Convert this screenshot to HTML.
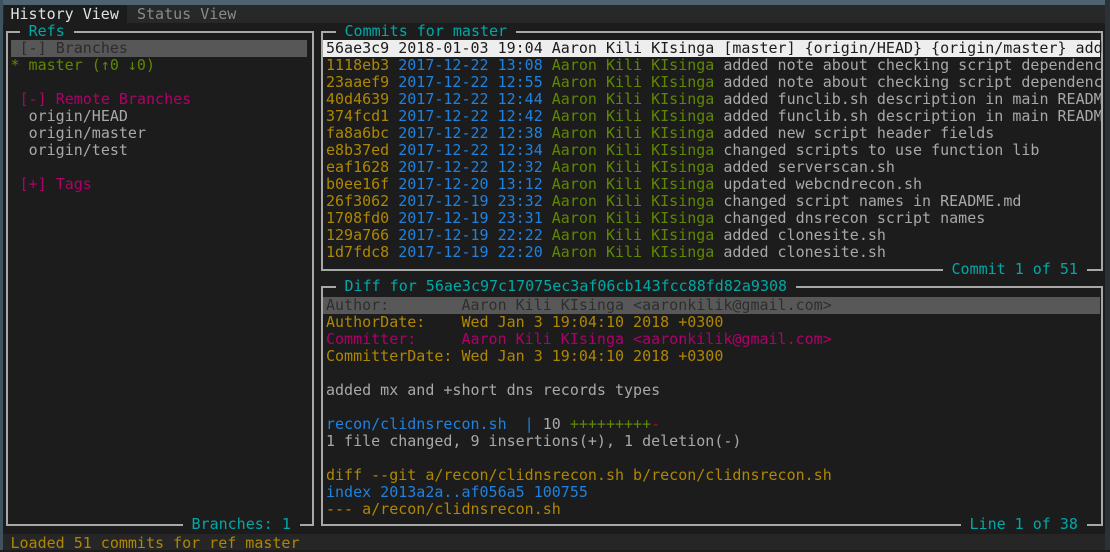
<!DOCTYPE html>
<html><head><meta charset="utf-8"><style>
html,body{margin:0;padding:0;}
body{width:1110px;height:550px;background:#1c1c1c;position:relative;overflow:hidden;font-family:"DejaVu Sans Mono","Liberation Mono",monospace;font-size:15px;}
.l{position:absolute;height:17px;line-height:17px;white-space:pre;color:#a8a8a8;}
.h{position:absolute;height:2px;background:#a8a8a8;}
.v{position:absolute;width:2px;background:#a8a8a8;}
.t{background:#1c1c1c;color:#00a8a8;}
.y{color:#af8700}.b{color:#1e82e0}.g{color:#5f8700}.m{color:#b0006a}.c{color:#00a8a8}.r{color:#c0002a}
</style></head><body>
<div style="position:absolute;left:0;top:0;width:1110px;height:5px;background:#4d6370"></div>
<div style="position:absolute;left:0;top:0;width:3px;height:550px;background:#3f525d"></div>
<div style="position:absolute;left:1105px;top:0;width:5px;height:550px;background:#2a3238"></div>
<div style="position:absolute;left:3px;top:5px;width:1102px;height:18px;background:#282828"></div>
<div style="position:absolute;left:4px;top:5px;width:123px;height:18px;background:#1c1c1c"></div>
<div class="l" style="top:6px;left:10.5px;color:#e0e0e0">History View</div>
<div class="l" style="top:6px;left:137px;color:#8a8a8a">Status View</div>

<!-- left box -->
<div class="h" style="left:6px;top:31px;width:308px"></div>
<div class="h" style="left:6px;top:524px;width:308px"></div>
<div class="v" style="left:6px;top:31px;height:495px"></div>
<div class="v" style="left:312px;top:31px;height:495px"></div>
<div class="l t" style="top:23px;left:19.6px"> Refs </div>
<div class="l t" style="top:516px;left:182.5px"> Branches: 1 </div>

<!-- commits box -->
<div class="h" style="left:321px;top:31px;width:782px"></div>
<div class="h" style="left:321px;top:269px;width:782px"></div>
<div class="v" style="left:321px;top:31px;height:240px"></div>
<div class="v" style="left:1101px;top:31px;height:240px"></div>
<div class="l t" style="top:23px;left:335.5px"> Commits for master </div>
<div class="l t" style="top:261px;left:942.5px"> Commit 1 of 51 </div>

<!-- diff box -->
<div class="h" style="left:321px;top:286px;width:782px"></div>
<div class="h" style="left:321px;top:524px;width:782px"></div>
<div class="v" style="left:321px;top:286px;height:240px"></div>
<div class="v" style="left:1101px;top:286px;height:240px"></div>
<div class="l t" style="top:278px;left:335.5px"> Diff for 56ae3c97c17075ec3af06cb143fcc88fd82a9308 </div>
<div class="l t" style="top:516px;left:960.5px"> Line 1 of 38 </div>

<!-- left content -->
<div style="position:absolute;left:11px;top:40px;width:296px;height:17px;background:#575757"></div>
<div class="l" style="top:40px;left:19.6px;color:#2c2c2c">[-] Branches</div>
<div class="l g" style="top:57px;left:10.5px">* master (↑0 ↓0)</div>
<div class="l m" style="top:91px;left:19.6px">[-] Remote Branches</div>
<div class="l" style="top:108px;left:28.6px">origin/HEAD</div>
<div class="l" style="top:125px;left:28.6px">origin/master</div>
<div class="l" style="top:142px;left:28.6px">origin/test</div>
<div class="l m" style="top:176px;left:19.6px">[+] Tags</div>

<!-- commits -->
<div style="position:absolute;left:323px;top:40px;width:777px;height:17px;background:#eeeeee"></div>
<div class="l" style="top:40px;left:326px;color:#1c1c1c">56ae3c9 2018-01-03 19:04 Aaron Kili KIsinga [master] {origin/HEAD} {origin/master} add</div>
<div class="l" style="top:57px;left:326px"><span class="y">1118eb3</span> <span class="b">2017-12-22 13:08</span> <span class="g">Aaron Kili KIsinga</span> added note about checking script dependenc</div>
<div class="l" style="top:74px;left:326px"><span class="y">23aaef9</span> <span class="b">2017-12-22 12:55</span> <span class="g">Aaron Kili KIsinga</span> added note about checking script dependenc</div>
<div class="l" style="top:91px;left:326px"><span class="y">40d4639</span> <span class="b">2017-12-22 12:44</span> <span class="g">Aaron Kili KIsinga</span> added funclib.sh description in main READM</div>
<div class="l" style="top:108px;left:326px"><span class="y">374fcd1</span> <span class="b">2017-12-22 12:42</span> <span class="g">Aaron Kili KIsinga</span> added funclib.sh description in main READM</div>
<div class="l" style="top:125px;left:326px"><span class="y">fa8a6bc</span> <span class="b">2017-12-22 12:38</span> <span class="g">Aaron Kili KIsinga</span> added new script header fields</div>
<div class="l" style="top:142px;left:326px"><span class="y">e8b37ed</span> <span class="b">2017-12-22 12:34</span> <span class="g">Aaron Kili KIsinga</span> changed scripts to use function lib</div>
<div class="l" style="top:159px;left:326px"><span class="y">eaf1628</span> <span class="b">2017-12-22 12:32</span> <span class="g">Aaron Kili KIsinga</span> added serverscan.sh</div>
<div class="l" style="top:176px;left:326px"><span class="y">b0ee16f</span> <span class="b">2017-12-20 13:12</span> <span class="g">Aaron Kili KIsinga</span> updated webcndrecon.sh</div>
<div class="l" style="top:193px;left:326px"><span class="y">26f3062</span> <span class="b">2017-12-19 23:32</span> <span class="g">Aaron Kili KIsinga</span> changed script names in README.md</div>
<div class="l" style="top:210px;left:326px"><span class="y">1708fd0</span> <span class="b">2017-12-19 23:31</span> <span class="g">Aaron Kili KIsinga</span> changed dnsrecon script names</div>
<div class="l" style="top:227px;left:326px"><span class="y">129a766</span> <span class="b">2017-12-19 22:22</span> <span class="g">Aaron Kili KIsinga</span> added clonesite.sh</div>
<div class="l" style="top:244px;left:326px"><span class="y">1d7fdc8</span> <span class="b">2017-12-19 22:20</span> <span class="g">Aaron Kili KIsinga</span> added clonesite.sh</div>

<!-- diff -->
<div style="position:absolute;left:323px;top:297px;width:777px;height:17px;background:#585858"></div>
<div class="l" style="top:297px;left:326px;color:#2e2e2e">Author:        Aaron Kili KIsinga &lt;aaronkilik@gmail.com&gt;</div>
<div class="l y" style="top:314px;left:326px">AuthorDate:    Wed Jan 3 19:04:10 2018 +0300</div>
<div class="l m" style="top:331px;left:326px">Committer:     Aaron Kili KIsinga &lt;aaronkilik@gmail.com&gt;</div>
<div class="l y" style="top:348px;left:326px">CommitterDate: Wed Jan 3 19:04:10 2018 +0300</div>
<div class="l" style="top:382px;left:326px">added mx and +short dns records types</div>
<div class="l" style="top:416px;left:326px"><span class="b">recon/clidnsrecon.sh  | </span>10 <span class="g">+++++++++</span><span class="r">-</span></div>
<div class="l" style="top:433px;left:326px">1 file changed, 9 insertions(+), 1 deletion(-)</div>
<div class="l y" style="top:467px;left:326px">diff --git a/recon/clidnsrecon.sh b/recon/clidnsrecon.sh</div>
<div class="l b" style="top:484px;left:326px">index 2013a2a..af056a5 100755</div>
<div class="l y" style="top:501px;left:326px">--- a/recon/clidnsrecon.sh</div>

<!-- status -->
<div style="position:absolute;left:3px;top:534px;width:1102px;height:16px;background:#262626"></div>
<div class="l y" style="top:535px;left:10.5px">Loaded 51 commits for ref master</div>
</body></html>
